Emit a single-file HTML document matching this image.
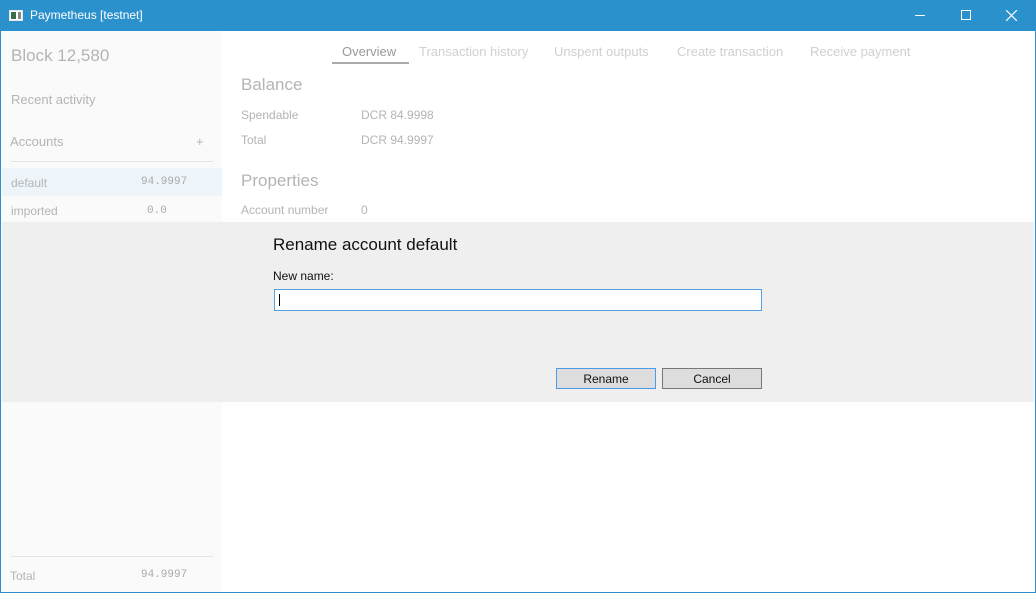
<!DOCTYPE html>
<html><head><meta charset="utf-8"><style>
*{margin:0;padding:0;box-sizing:border-box}
body{width:1036px;height:593px;position:relative;overflow:hidden;background:#fff;font-family:"Liberation Sans",sans-serif;}
.a{position:absolute;white-space:nowrap}
.win{position:absolute;left:0;top:0;width:1036px;height:593px;border:1px solid #2a8fcb;}
.tb{position:absolute;left:0;top:0;width:1036px;height:31px;background:#2b91cc;color:#fff;font-size:12px}
.side{position:absolute;left:1px;top:31px;width:221px;height:561px;background:#fafafa}
.g{color:#b4b4b4}
.mono{font-family:"Liberation Mono",monospace;font-size:11px;color:#aaa}
</style></head><body>
<div class="tb">
 <div class="a" style="left:9px;top:10px;width:14px;height:11px;border:1px solid #e8e8e8;background:#fff"><div style="position:absolute;left:1px;top:1px;width:5px;height:7px;background:#3a6b4a"></div><div style="position:absolute;right:1px;top:1px;width:3px;height:7px;background:#888"></div></div>
 <div class="a" style="left:30px;top:8px">Paymetheus [testnet]</div>
 <div class="a" style="left:915px;top:15px;width:10px;height:1px;background:#fff"></div>
 <div class="a" style="left:961px;top:10px;width:10px;height:10px;border:1px solid #fff"></div>
 <svg class="a" style="left:1006px;top:10px" width="11" height="11"><path d="M0 0L11 11M11 0L0 11" stroke="#fff" stroke-width="1.2"/></svg>
</div>
<div class="side">
 <div class="a g" style="left:10px;top:15px;font-size:17px">Block 12,580</div>
 <div class="a g" style="left:10px;top:61px;font-size:13px">Recent activity</div>
 <div class="a g" style="left:9px;top:103px;font-size:13px">Accounts</div>
 <div class="a g" style="left:195px;top:103px;font-size:13px">+</div>
 <div class="a" style="left:10px;top:130px;width:202px;height:1px;background:#e4e4e4"></div>
 <div class="a" style="left:1px;top:137px;width:220px;height:28px;background:#eef5fa"></div>
 <div class="a g" style="left:10px;top:145px;font-size:12px">default</div>
 <div class="a mono" style="left:140px;top:145px">94.9997</div>
 <div class="a g" style="left:10px;top:173px;font-size:12px">imported</div>
 <div class="a mono" style="left:146px;top:174px">0.0</div>
 <div class="a" style="left:10px;top:525px;width:202px;height:1px;background:#e4e4e4"></div>
 <div class="a g" style="left:9px;top:538px;font-size:12px">Total</div>
 <div class="a mono" style="left:140px;top:538px">94.9997</div>
</div>
<div class="a" style="left:342px;top:44px;font-size:13px;color:#999">Overview</div>
<div class="a" style="left:332px;top:62px;width:77px;height:2px;background:#aaa"></div>
<div class="a" style="left:419px;top:44px;font-size:13px;color:#d0d0d0">Transaction history</div>
<div class="a" style="left:554px;top:44px;font-size:13px;color:#d0d0d0">Unspent outputs</div>
<div class="a" style="left:677px;top:44px;font-size:13px;color:#d0d0d0">Create transaction</div>
<div class="a" style="left:810px;top:44px;font-size:13px;color:#d0d0d0">Receive payment</div>
<div class="a g" style="left:241px;top:75px;font-size:17px">Balance</div>
<div class="a g" style="left:241px;top:108px;font-size:12px">Spendable</div>
<div class="a g" style="left:361px;top:108px;font-size:12px">DCR 84.9998</div>
<div class="a g" style="left:241px;top:133px;font-size:12px">Total</div>
<div class="a g" style="left:361px;top:133px;font-size:12px">DCR 94.9997</div>
<div class="a g" style="left:241px;top:171px;font-size:17px">Properties</div>
<div class="a g" style="left:241px;top:203px;font-size:12px">Account number</div>
<div class="a g" style="left:361px;top:203px;font-size:12px">0</div>
<div class="a" style="left:2px;top:222px;width:1032px;height:180px;background:#efefef">
 <div class="a" style="left:271px;top:13px;font-size:17px;color:#111">Rename account default</div>
 <div class="a" style="left:271px;top:47px;font-size:12px;color:#111">New name:</div>
 <div class="a" style="left:272px;top:67px;width:488px;height:22px;background:#fff;border:1px solid #5a9fe0"><div style="position:absolute;left:4px;top:4px;width:1px;height:12px;background:#000"></div></div>
 <div class="a" style="left:554px;top:146px;width:100px;height:21px;background:#dddddd;border:1px solid #4a9be6;font-size:12px;text-align:center;line-height:20px;color:#111">Rename</div>
 <div class="a" style="left:660px;top:146px;width:100px;height:21px;background:#dddddd;border:1px solid #777;font-size:12px;text-align:center;line-height:20px;color:#111">Cancel</div>
</div>
<div class="win"></div>
</body></html>
